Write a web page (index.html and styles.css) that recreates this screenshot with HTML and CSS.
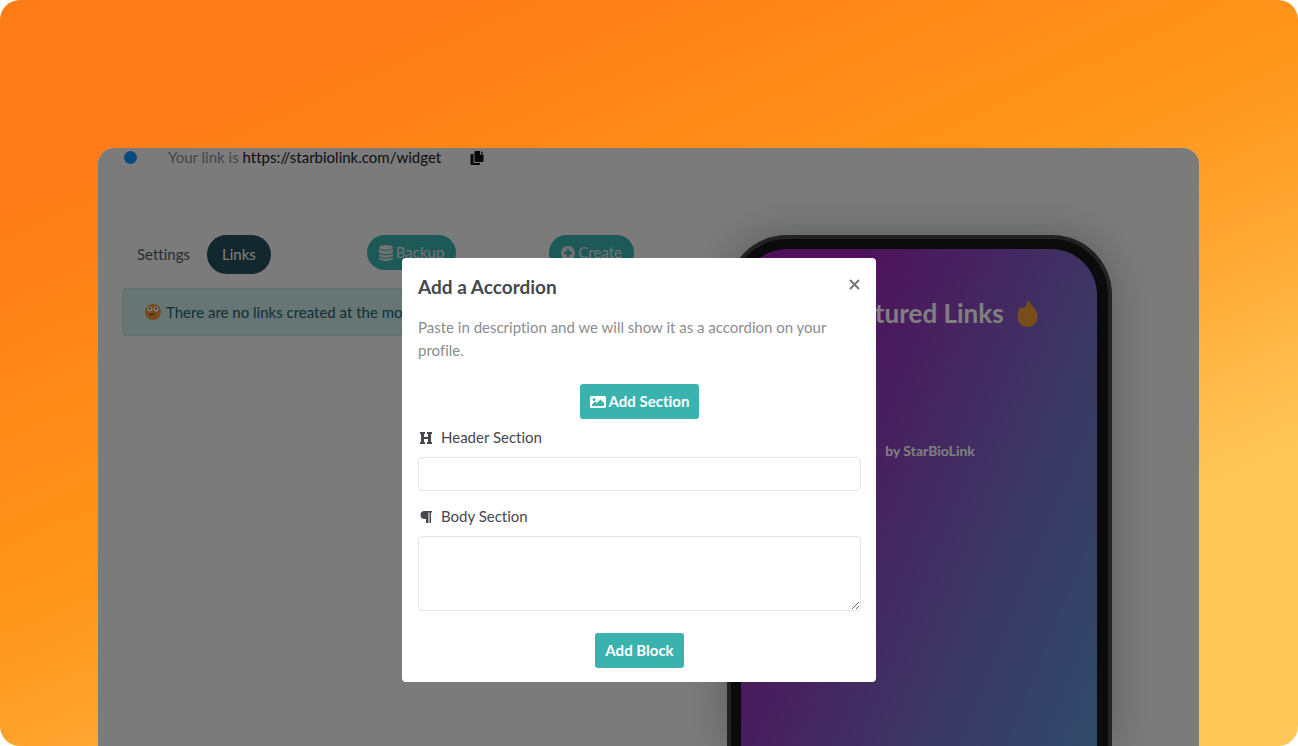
FILE: index.html
```html
<!DOCTYPE html>
<html lang="en">
<head>
<meta charset="utf-8">
<title>StarBioLink</title>
<link rel="stylesheet" href="styles.css">
</head>
<body>
<svg width="0" height="0" class="defs" aria-hidden="true">
  <symbol id="flame" viewBox="0 0 21 27">
    <path d="M11 0c1 4 9.500 8 9.500 16.500C20.500 23 16 27 10.500 27S.5 23 .5 17c0-4 1-7.500 3.500-10 .5 1 1 1.300 2 1C8.500 7 10.500 4 11 0z"/>
  </symbol>
</svg>
<div class="stage">
  <main class="app">
    <div class="linkbar">
      <span class="status"></span>
      <p class="your-link">Your link is <a href="#">https://starbiolink.com/widget</a></p>
      <button class="copy" type="button" aria-label="Copy link">
        <svg width="14" height="14" viewBox="0 0 14 14"><path d="M5.500 0H10v3.500h3.500V10a1 1 0 0 1-1 1H5.500a1 1 0 0 1-1-1V1a1 1 0 0 1 1-1zM11 0l2.500 2.500H11zM1 3h2.500v8a1 1 0 0 0 1 1H10v1a1 1 0 0 1-1 1H1.500a1 1 0 0 1-1-1V4a1 1 0 0 1 .5-1z"/></svg>
      </button>
    </div>
    <div class="columns">
      <section class="editor">
        <div class="toolbar">
          <nav class="tabs">
            <a class="tab" href="#">Settings</a>
            <a class="tab tab-active" href="#">Links</a>
          </nav>
          <div class="actions">
            <button class="pill" type="button">
              <svg width="14" height="16" viewBox="0 0 14 16"><ellipse cx="7" cy="2.500" rx="7" ry="2.500"/><path d="M0 4.300c3 2 11 2 14 0V7c-1 3-13 3-14 0zM0 8.800c3 2 11 2 14 0v1.700c-1 3-13 3-14 0zM0 12.300c3 2 11 2 14 0v1.200c-1 3.300-13 3.300-14 0z"/></svg>
              Backup
            </button>
            <button class="pill" type="button">
              <svg width="14" height="14" viewBox="0 0 14 14"><path fill-rule="evenodd" d="M7 0a7 7 0 1 1 0 14A7 7 0 0 1 7 0zM5.800 3v2.800H3v2.400h2.800V11h2.400V8.200H11V5.800H8.200V3z"/></svg>
              Create
            </button>
          </div>
        </div>
        <p class="alert">
          <svg width="16" height="16" viewBox="0 0 16 16"><circle cx="8" cy="8" r="8" fill="#f59331"/><circle cx="5" cy="5" r="2.500" fill="#fff"/><circle cx="11" cy="5" r="2.500" fill="#fff"/><circle cx="5" cy="4.500" r="1" fill="#553f25"/><circle cx="11" cy="4.500" r="1" fill="#553f25"/><path d="M5.500 11.500v-1q2-.5 4-.5" fill="none" stroke="#553f25" stroke-width="1.200"/></svg>
          There are no links created at the moment
        </p>
      </section>
      <aside class="phone">
        <div class="screen">
          <h2 class="featured"><svg class="flame" width="21" height="27"><use href="#flame"/></svg>Featured Links<svg class="flame" width="21" height="27"><use href="#flame"/></svg></h2>
          <p class="credit"><svg class="flame" width="14" height="18"><use href="#flame"/></svg>by StarBioLink</p>
        </div>
      </aside>
    </div>
    <div class="backdrop">
      <form class="modal" role="dialog" aria-labelledby="modal-title">
        <header class="modal-head">
          <h1 id="modal-title">Add a Accordion</h1>
          <button class="close" type="button" aria-label="Close">
            <svg width="11" height="11" viewBox="0 0 11 11"><path d="M1 1l9 9M10 1l-9 9" stroke="#757575" stroke-width="2" fill="none"/></svg>
          </button>
        </header>
        <p class="lead">Paste in description and we will show it as a accordion on your profile.</p>
        <button class="btn" type="button">
          <svg width="16" height="12" viewBox="0 0 16 12"><path fill-rule="evenodd" d="M1.500 0h13A1.500 1.500 0 0 1 16 1.500v9a1.500 1.500 0 0 1-1.500 1.500h-13A1.500 1.500 0 0 1 0 10.500v-9A1.500 1.500 0 0 1 1.500 0zM4 2a1.500 1.500 0 1 0 0 3A1.500 1.500 0 0 0 4 2zM2 10h12V7l-3.500-3.500L7 7 5 5.500l-3 3z"/></svg>
          Add Section
        </button>
        <label class="label" for="head"><svg width="16" height="14" viewBox="0 0 16 14"><path d="M2 1h5v2H6v3h4V3H9V1h5v2h-1v8h1v2H9v-2h1V8H6v3h1v2H2v-2h1V3H2z" fill="#46484d"/></svg>Header Section</label>
        <input class="field" id="head" type="text">
        <label class="label" for="body"><svg width="16" height="14" viewBox="0 0 16 14"><path d="M6.500 1H14v1.500h-1V13h-1.500V2.500h-1V13H8V9H6.500a4 4 0 0 1 0-8z" fill="#46484d"/></svg>Body Section</label>
        <textarea class="field area" id="body"></textarea>
        <button class="btn" type="submit">Add Block</button>
      </form>
    </div>
  </main>
</div>
</body>
</html>
```

FILE: styles.css
```css
* { box-sizing: border-box; }

body {
  margin: 0;
  background: #fff;
  font-family: Lato, "Liberation Sans", sans-serif;
  font-size: 15px;
  line-height: 23px;
  font-variant-ligatures: none;
  color: #46484d;
}

h1, h2, p { margin: 0; }
button, input, textarea { font: inherit; font-variant-ligatures: none; }
a { color: inherit; text-decoration: none; }
svg { fill: currentColor; flex: none; }
.defs { position: absolute; }

.stage {
  display: flex;
  min-height: 100vh;
  padding: 148px 99px 0 98px;
  border-radius: 20px;
  background: linear-gradient(156deg, #ff7b18 0%, #ff7d18 16%, #ff9418 45%, #ffa22c 57%, #ffc658 77%);
}

.app {
  position: relative;
  display: flex;
  flex-direction: column;
  flex: 1;
  min-width: 0;
  overflow: hidden;
  border-radius: 16px 16px 0 0;
  background: #f6f6f8;
}

.linkbar {
  display: flex;
  align-items: center;
  height: 19px;
  padding-left: 26px;
}
.status {
  width: 13px;
  height: 13px;
  margin-right: 31px;
  border-radius: 50%;
  background: #0a94fa;
}
.your-link { color: #8c8c8f; }
.your-link a { color: #202022; }
.copy {
  display: flex;
  margin-left: 29px;
  padding: 0;
  border: 0;
  background: none;
  color: #101010;
}

.columns {
  display: flex;
  flex: 1;
  gap: 28px;
  padding: 68px 87px 0 24px;
}
.editor { flex: 1; }
.toolbar {
  display: flex;
  justify-content: space-between;
  margin-bottom: 14px;
  padding-right: 65px;
}
.tabs { display: flex; align-items: center; gap: 2px; }
.tab {
  padding: 8px 15px;
  border-radius: 20px;
  color: #4c5d68;
}
.tab-active {
  background: #264e5e;
  color: #fff;
}
.actions { display: flex; align-items: flex-start; gap: 93px; }
.pill {
  display: flex;
  align-items: center;
  gap: 3px;
  height: 35px;
  padding: 0 12px;
  border: 0;
  border-radius: 18px;
  background: #3ab5af;
  color: #e4e4e4;
}
.alert {
  display: flex;
  align-items: center;
  gap: 5px;
  height: 48px;
  padding: 0 22px;
  border: 1px solid #c0e6e6;
  border-radius: 4px;
  background: #cfeaea;
  color: #22626e;
}

.phone {
  display: flex;
  width: 385px;
  padding: 10px 11px 0 10px;
  border: 4px solid #444;
  border-bottom: 0;
  border-radius: 60px 60px 0 0;
  background: #161616;
  box-shadow: 0 0 40px rgba(30, 40, 30, .3);
}
.screen {
  flex: 1;
  padding-top: 49px;
  border-radius: 46px 46px 0 0;
  background: linear-gradient(112deg, #a022b6 20%, #7672ca 70%, #6094d4 100%);
  color: #fff;
}
.featured {
  display: flex;
  align-items: center;
  justify-content: center;
  gap: 13px;
  height: 30px;
  font-size: 26px;
}
.flame { color: #f09a38; }
.credit {
  display: flex;
  align-items: center;
  justify-content: center;
  gap: 8px;
  margin-top: 111px;
  font-size: 14px;
  font-weight: 700;
}

.backdrop {
  position: absolute;
  inset: 0;
  display: flex;
  align-items: flex-start;
  justify-content: center;
  padding: 110px 19px 0 0;
  background: rgba(0, 0, 0, .5);
}
.modal {
  display: flex;
  flex-direction: column;
  align-items: center;
  width: 474px;
  padding: 14px 15px 14px 16px;
  border-radius: 4px;
  background: #fff;
}
.modal-head {
  display: flex;
  align-self: stretch;
  justify-content: space-between;
  margin-bottom: 14px;
}
.modal-head h1 { font-size: 19px; line-height: 30px; }
.close {
  display: flex;
  height: 24px;
  padding: 7px 1px;
  border: 0;
  background: none;
}
.lead { align-self: stretch; margin-bottom: 22px; color: #8b8d90; }
.btn {
  display: flex;
  align-items: center;
  gap: 3px;
  height: 35px;
  padding: 0 10px;
  border: 0;
  border-radius: 3px;
  background: #3ab2ad;
  color: #fff;
  font-weight: 700;
}
.label {
  display: flex;
  align-self: stretch;
  align-items: center;
  gap: 7px;
  margin: 7px 0 8px;
}
.field {
  align-self: stretch;
  display: block;
  height: 34px;
  margin-bottom: 7px;
  padding: 6px 12px;
  border: 1px solid #e4e5e7;
  border-radius: 4px;
  background: #fff;
}
.area { height: 75px; margin-bottom: 22px; }
```
